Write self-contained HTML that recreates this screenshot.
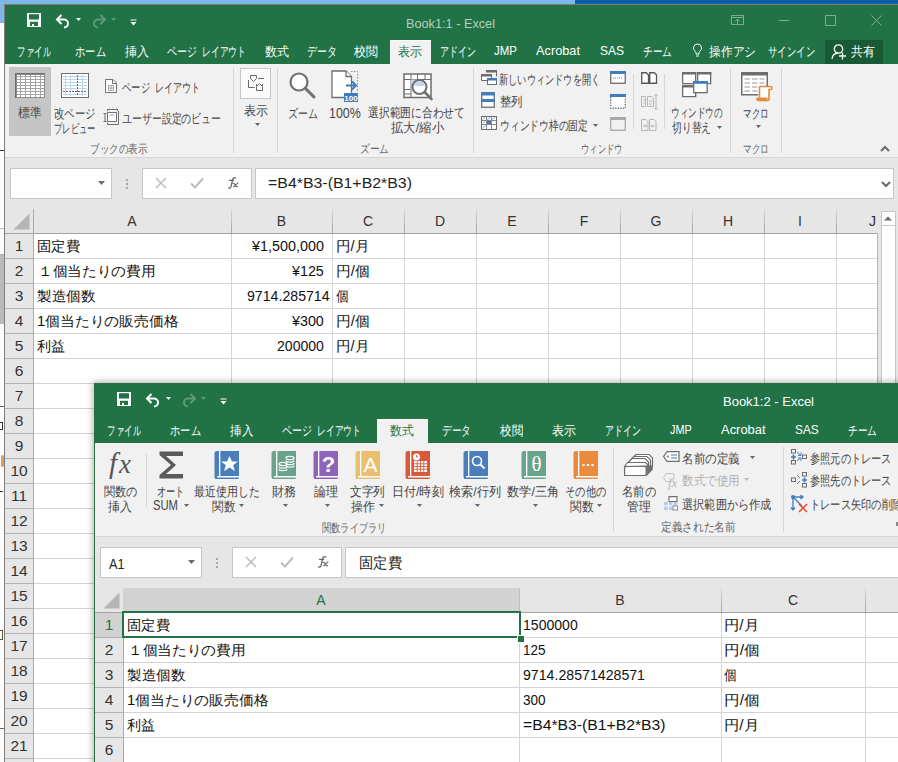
<!DOCTYPE html><html><head><meta charset='utf-8'><style>
*{margin:0;padding:0}
html,body{width:898px;height:762px;overflow:hidden;background:#fff}
body{position:relative;font-family:"Liberation Sans",sans-serif}
div{position:absolute}
.t{white-space:nowrap;line-height:1}
.t span{display:inline-block;transform-origin:0 0}
</style></head><body>
<div style="left:0px;top:0px;width:575px;height:4px;background:#7db8e8"></div>
<div style="left:575px;top:0px;width:323px;height:4px;background:#0a5bab"></div>
<div style="left:0px;top:4px;width:4px;height:19px;background:#7db8e8"></div>
<div style="left:0px;top:23px;width:4px;height:4px;background:#ffffff"></div>
<div style="left:0px;top:27px;width:4px;height:735px;background:#fcfcfc"></div>
<div style="left:0px;top:150px;width:4px;height:1px;background:#333"></div>
<div style="left:0px;top:228px;width:4px;height:1px;background:#bbb"></div>
<div style="left:0px;top:254px;width:4px;height:70px;background:#b9b9b9"></div>
<div style="left:0px;top:406px;width:4px;height:1px;background:#666"></div>
<div style="left:0px;top:422px;width:3px;height:8px;border-right:1px solid #333;border-top:1px solid #333;border-bottom:1px solid #333;box-sizing:border-box"></div>
<div style="left:1px;top:455px;width:3px;height:12px;background:#d9a066;border-radius:2px"></div>
<div style="left:0px;top:491px;width:3px;height:1px;background:#333"></div>
<div style="left:0px;top:630px;width:3px;height:10px;border-right:1px solid #553;border-top:1px solid #553;border-bottom:1px solid #553;box-sizing:border-box"></div>
<div style="left:0px;top:728px;width:4px;height:1px;background:#666"></div>
<div style="left:4px;top:4px;width:894px;height:1px;background:#837a7a"></div>
<div style="left:4px;top:4px;width:1px;height:758px;background:#837a7a"></div>
<div style="left:5px;top:5px;width:893px;height:59px;background:#217346"></div>
<div style="left:5px;top:64px;width:893px;height:93px;background:#f1f1f1"></div>
<div style="left:5px;top:157px;width:893px;height:1px;background:#d6d6d6"></div>
<div style="left:5px;top:158px;width:893px;height:604px;background:#e6e6e6"></div>
<svg style="position:absolute;left:27px;top:13px;overflow:visible" width="14" height="14" viewBox="0 0 14 14"><rect x="0" y="0" width="14" height="14" fill="#ffffff"/><rect x="2" y="1.2" width="10" height="5.3" fill="#217346"/><rect x="3" y="8.8" width="8" height="4.2" fill="#217346"/><rect x="5" y="11" width="2" height="2" fill="#ffffff"/></svg>
<svg style="position:absolute;left:55px;top:13px;overflow:visible" width="16" height="14" viewBox="0 0 16 14"><path d="M3 6.5h6a4 4 0 0 1 0 8" fill="none" stroke="#ffffff" stroke-width="2"/><path d="M6.5 2L2 6.5L6.5 11" fill="none" stroke="#ffffff" stroke-width="2"/></svg>
<svg style="position:absolute;left:76px;top:18px;overflow:visible" width="6" height="4" viewBox="0 0 6 4"><path d="M0 0h5l-2.5 3z" fill="#ffffff"/></svg>
<svg style="position:absolute;left:91px;top:13px;overflow:visible" width="16" height="14" viewBox="0 0 16 14"><path d="M13 6.5h-6a4 4 0 0 0 0 8" fill="none" stroke="#5f9a78" stroke-width="2"/><path d="M9.5 2L14 6.5L9.5 11" fill="none" stroke="#5f9a78" stroke-width="2"/></svg>
<svg style="position:absolute;left:111px;top:18px;overflow:visible" width="6" height="4" viewBox="0 0 6 4"><path d="M0 0h5l-2.5 3z" fill="#5f9a78"/></svg>
<svg style="position:absolute;left:130px;top:19px;overflow:visible" width="7" height="7" viewBox="0 0 7 7"><path d="M0.5 1h6" stroke="#ffffff" stroke-width="1"/><path d="M0.5 3h6l-3 3.5z" fill="#ffffff"/></svg>
<div class="t f" style="left:406px;top:16.7px;width:89.0px;font-size:13px;color:#b3d0be;"><span>Book1:1 - Excel</span></div>
<svg style="position:absolute;left:731px;top:15px;overflow:visible" width="13" height="10" viewBox="0 0 13 10"><path d="M0.5 0.5h12v9h-12zM0.5 2.5h12" fill="none" stroke="#7fae93" stroke-width="1"/><path d="M6.5 9.5v-5M4 6.5l2.5-2.5l2.5 2.5" fill="none" stroke="#7fae93" stroke-width="1"/></svg>
<div style="left:779px;top:20px;width:10px;height:1px;background:#7fae93"></div>
<svg style="position:absolute;left:825px;top:15px;overflow:visible" width="11" height="11" viewBox="0 0 11 11"><path d="M0.5 0.5h10v10h-10z" fill="none" stroke="#7fae93" stroke-width="1"/></svg>
<svg style="position:absolute;left:871px;top:15px;overflow:visible" width="11" height="11" viewBox="0 0 11 11"><path d="M0.5 0.5l10 10M10.5 0.5l-10 10" fill="none" stroke="#7fae93" stroke-width="1"/></svg>
<div style="left:390px;top:40px;width:41px;height:24px;background:#f1f1f1;border-top:1px solid #fafafa;box-sizing:border-box"></div>
<div style="left:825px;top:40px;width:58px;height:24px;background:#195a36"></div>
<div class="t f" style="left:17px;top:45.0px;width:34.0px;font-size:13px;color:#ffffff;"><span>ファイル</span></div>
<div class="t f" style="left:75px;top:45.0px;width:31.0px;font-size:13px;color:#ffffff;"><span>ホーム</span></div>
<div class="t f" style="left:125px;top:45.0px;width:24.0px;font-size:13px;color:#ffffff;"><span>挿入</span></div>
<div class="t f" style="left:167px;top:45.0px;width:30.0px;font-size:13px;color:#ffffff;"><span>ページ</span></div>
<div class="t f" style="left:202px;top:45.0px;width:44.0px;font-size:13px;color:#ffffff;"><span>レイアウト</span></div>
<div class="t f" style="left:265px;top:45.0px;width:24.0px;font-size:13px;color:#ffffff;"><span>数式</span></div>
<div class="t f" style="left:307px;top:45.0px;width:30.0px;font-size:13px;color:#ffffff;"><span>データ</span></div>
<div class="t f" style="left:354px;top:45.0px;width:24.0px;font-size:13px;color:#ffffff;"><span>校閲</span></div>
<div class="t f" style="left:440px;top:45.0px;width:36.0px;font-size:13px;color:#ffffff;"><span>アドイン</span></div>
<div class="t f" style="left:494px;top:44.0px;width:23.0px;font-size:13px;color:#ffffff;"><span>JMP</span></div>
<div class="t f" style="left:536px;top:44.0px;width:44.0px;font-size:13px;color:#ffffff;"><span>Acrobat</span></div>
<div class="t f" style="left:600px;top:44.0px;width:24.0px;font-size:13px;color:#ffffff;"><span>SAS</span></div>
<div class="t f" style="left:643px;top:45.0px;width:29.0px;font-size:13px;color:#ffffff;"><span>チーム</span></div>
<div class="t f" style="left:709px;top:45.0px;width:47.0px;font-size:13px;color:#ffffff;"><span>操作アシ</span></div>
<div class="t f" style="left:768px;top:45.0px;width:47.0px;font-size:13px;color:#ffffff;"><span>サインイン</span></div>
<div class="t f" style="left:851px;top:45.0px;width:24.0px;font-size:13px;color:#ffffff;"><span>共有</span></div>
<div class="t f" style="left:398px;top:45.0px;width:24.0px;font-size:13px;color:#217346;"><span>表示</span></div>
<svg style="position:absolute;left:692px;top:43px;overflow:visible" width="11" height="15" viewBox="0 0 11 15"><path d="M5.5 1a4 4 0 0 0-2.3 7.3c.6.5.8 1 .8 1.7v1h3v-1c0-.7.2-1.2.8-1.7A4 4 0 0 0 5.5 1z" fill="none" stroke="#fff" stroke-width="1"/><path d="M4 13h3" stroke="#fff" stroke-width="1"/></svg>
<svg style="position:absolute;left:831px;top:44px;overflow:visible" width="17" height="16" viewBox="0 0 17 16"><circle cx="7.5" cy="5" r="4.2" fill="none" stroke="#fff" stroke-width="1.3"/><path d="M1 15c0-3.2 2.5-6 6-6" fill="none" stroke="#fff" stroke-width="1.3"/><path d="M11.5 8.5v7M8 12h7" stroke="#fff" stroke-width="1.3"/></svg>
<div style="left:9px;top:67px;width:42px;height:69px;background:#c5c5c5"></div>
<svg style="position:absolute;left:15px;top:73px;overflow:visible" width="30" height="25" viewBox="0 0 30 25"><g shape-rendering="crispEdges"><rect x="0" y="0" width="30" height="25" fill="#6d6d6d"/><rect x="1" y="1" width="28" height="23" fill="#fff"/><rect x="5" y="1" width="1" height="23" fill="#a4a4a4"/><rect x="10" y="1" width="1" height="23" fill="#a4a4a4"/><rect x="15" y="1" width="1" height="23" fill="#a4a4a4"/><rect x="20" y="1" width="1" height="23" fill="#a4a4a4"/><rect x="25" y="1" width="1" height="23" fill="#a4a4a4"/><rect x="1" y="3" width="28" height="1" fill="#a4a4a4"/><rect x="1" y="6" width="28" height="1" fill="#a4a4a4"/><rect x="1" y="9" width="28" height="1" fill="#a4a4a4"/><rect x="1" y="12" width="28" height="1" fill="#a4a4a4"/><rect x="1" y="15" width="28" height="1" fill="#a4a4a4"/><rect x="1" y="18" width="28" height="1" fill="#a4a4a4"/><rect x="1" y="21" width="28" height="1" fill="#a4a4a4"/><rect x="1" y="1" width="28" height="23" fill="none" stroke="#8a8a8a" stroke-width="1"/></g></svg>
<div class="t f" style="left:18px;top:105.5px;width:23.5px;font-size:13px;color:#444444;"><span>標準</span></div>
<svg style="position:absolute;left:61px;top:73px;overflow:visible" width="28" height="25" viewBox="0 0 28 25"><g shape-rendering="crispEdges"><rect x="0" y="0" width="28" height="25" fill="#6d6d6d"/><rect x="1" y="1" width="26" height="23" fill="#fff"/><rect x="4" y="2" width="1" height="21" fill="#bcd3ec"/><rect x="9" y="2" width="1" height="21" fill="#bcd3ec"/><rect x="21" y="2" width="1" height="21" fill="#bcd3ec"/><rect x="2" y="3" width="24" height="1" fill="#bcd3ec"/><rect x="2" y="6" width="24" height="1" fill="#bcd3ec"/><rect x="2" y="9" width="24" height="1" fill="#bcd3ec"/><rect x="2" y="12" width="24" height="1" fill="#bcd3ec"/><rect x="2" y="15" width="24" height="1" fill="#bcd3ec"/><rect x="2" y="21" width="24" height="1" fill="#bcd3ec"/><rect x="16" y="2" width="1" height="2" fill="#6d6d6d"/><rect x="16" y="5" width="1" height="2" fill="#6d6d6d"/><rect x="16" y="8" width="1" height="2" fill="#6d6d6d"/><rect x="16" y="11" width="1" height="2" fill="#6d6d6d"/><rect x="16" y="14" width="1" height="2" fill="#6d6d6d"/><rect x="16" y="17" width="1" height="2" fill="#6d6d6d"/><rect x="16" y="20" width="1" height="2" fill="#6d6d6d"/><rect x="2" y="18" width="2" height="1" fill="#6d6d6d"/><rect x="5" y="18" width="2" height="1" fill="#6d6d6d"/><rect x="8" y="18" width="2" height="1" fill="#6d6d6d"/><rect x="11" y="18" width="2" height="1" fill="#6d6d6d"/><rect x="14" y="18" width="2" height="1" fill="#6d6d6d"/><rect x="17" y="18" width="2" height="1" fill="#6d6d6d"/><rect x="20" y="18" width="2" height="1" fill="#6d6d6d"/><rect x="23" y="18" width="2" height="1" fill="#6d6d6d"/></g></svg>
<div class="t f" style="left:54px;top:106.5px;width:41.7px;font-size:13px;color:#444444;"><span>改ページ</span></div>
<div class="t f" style="left:54px;top:121.5px;width:41.7px;font-size:13px;color:#444444;"><span>プレビュー</span></div>
<svg style="position:absolute;left:105px;top:79px;overflow:visible" width="12" height="14" viewBox="0 0 12 14"><path d="M0.5 0.5h7.5l3.5 3.5v9.5h-11z" fill="#fff" stroke="#707070" stroke-width="1"/><path d="M7.5 0.5v4h4" fill="none" stroke="#707070" stroke-width="1"/><path d="M3.5 6.5h5v5h-5zM6 6.5v5M3.5 9h5" fill="none" stroke="#a8a8a8" stroke-width="1"/></svg>
<div class="t f" style="left:122.3px;top:81.2px;width:28.0px;font-size:13px;color:#444444;"><span>ページ</span></div>
<div class="t f" style="left:155px;top:81.2px;width:45.2px;font-size:13px;color:#444444;"><span>レイアウト</span></div>
<svg style="position:absolute;left:103px;top:109px;overflow:visible" width="16" height="16" viewBox="0 0 16 16"><g fill="none" stroke="#707070" stroke-width="1"><path d="M0.5 4.5h3M2 4.5v8M0.5 12.5h3"/><path d="M4.5 0.5h10M4.5 0v2M14.5 0v2"/><path d="M4.5 3.5h9v9h-9z" fill="#fff"/><path d="M15.5 2v13.5h-11v-2"/></g><path d="M6.5 6h5" stroke="#a9c4e4" stroke-width="1.5"/></svg>
<div class="t f" style="left:122px;top:112.0px;width:99.0px;font-size:13px;color:#444444;"><span>ユーザー設定のビュー</span></div>
<div class="t f" style="left:90.4px;top:142.5px;width:57.2px;font-size:12px;color:#666666;"><span>ブックの表示</span></div>
<div style="left:233px;top:68px;width:1px;height:85px;background:#d5d5d5"></div>
<div style="left:240px;top:68px;width:31px;height:31px;background:#fafafa;border:1px solid #c6c6c6;box-sizing:border-box"></div>
<svg style="position:absolute;left:240px;top:68px;overflow:visible" width="30" height="30" viewBox="0 0 30 30"><g fill="none" stroke="#6a6a6a" stroke-width="1"><path d="M10.5 7.5h6v3l-3 3l-3-3z"/><path d="M8.5 12v7.5h6"/><path d="M18 10.5h6"/><path d="M16.5 16v2M22.5 16v2"/><path d="M16.5 22.5v-4l3-3l3 3v4z"/></g></svg>
<div class="t f" style="left:243.7px;top:103.5px;width:24.0px;font-size:13px;color:#444444;"><span>表示</span></div>
<svg style="position:absolute;left:255px;top:123px;overflow:visible" width="6" height="4" viewBox="0 0 6 4"><path d="M0 0h5l-2.5 3z" fill="#666"/></svg>
<div style="left:277px;top:68px;width:1px;height:85px;background:#d5d5d5"></div>
<svg style="position:absolute;left:288px;top:71px;overflow:visible" width="30" height="30" viewBox="0 0 30 30"><circle cx="11" cy="11" r="8.5" fill="#fff" stroke="#707070" stroke-width="2.2"/><path d="M17.5 17.5l8.5 8.5" stroke="#707070" stroke-width="3" stroke-linecap="round"/></svg>
<div class="t f" style="left:288px;top:106.5px;width:30.0px;font-size:13px;color:#444444;"><span>ズーム</span></div>
<svg style="position:absolute;left:331px;top:70px;overflow:visible" width="28" height="32" viewBox="0 0 28 32"><path d="M1 1h14l5.5 5.5v21h-19.5z" fill="#fff" stroke="#6d6d6d" stroke-width="1.3"/><path d="M15 1v5.5h5.5" fill="#fff" stroke="#6d6d6d" stroke-width="1.3"/><path d="M20 1.5h6.5v19" fill="none" stroke="#888" stroke-width="1" stroke-dasharray="1.5 1.5"/><path d="M15 15.5h10M21 11.5l4 4l-4 4" fill="none" stroke="#3f7cc0" stroke-width="2"/><rect x="13" y="23" width="14" height="9" fill="#3f7cc0"/><text x="20" y="30.6" font-size="8" font-family="Liberation Sans" font-weight="bold" fill="#fff" text-anchor="middle">100</text></svg>
<div class="t f" style="left:328.7px;top:105.7px;width:31.7px;font-size:14px;color:#444444;"><span>100%</span></div>
<svg style="position:absolute;left:403px;top:73px;overflow:visible" width="31" height="29" viewBox="0 0 31 29"><rect x="1" y="1" width="27" height="23.5" fill="#fff" stroke="#6d6d6d" stroke-width="1.5"/><path d="M1 6.5h27M8 1v23M14.5 1v6M22 1v6M1 16.5h6M1 21h7" stroke="#6d6d6d" stroke-width="1"/><rect x="8" y="6.5" width="7" height="5" fill="#c3d6ec"/><circle cx="16.5" cy="14" r="7" fill="#fff" stroke="#707070" stroke-width="2"/><path d="M11.5 13a5 5 0 0 1 10 0z" fill="#c3d6ec"/><path d="M21.5 19l7 7" stroke="#707070" stroke-width="2.6" stroke-linecap="round"/></svg>
<div class="t f" style="left:368px;top:106.0px;width:97.0px;font-size:13px;color:#444444;"><span>選択範囲に合わせて</span></div>
<div class="t f" style="left:391px;top:121.2px;width:53.0px;font-size:13px;color:#444444;"><span>拡大/縮小</span></div>
<div class="t f" style="left:360px;top:142.5px;width:29.0px;font-size:12px;color:#666666;"><span>ズーム</span></div>
<div style="left:473px;top:68px;width:1px;height:85px;background:#d5d5d5"></div>
<svg style="position:absolute;left:481px;top:70px;overflow:visible" width="16" height="15" viewBox="0 0 16 15"><path d="M5.5 0.5h10v6" fill="none" stroke="#6d6d6d" stroke-width="1"/><rect x="5" y="0" width="11" height="2.5" fill="#6d6d6d"/><path d="M0.5 4.5h10v6h-10z" fill="#fff" stroke="#6d6d6d" stroke-width="1"/><rect x="0" y="4" width="11" height="2.5" fill="#6d6d6d"/><rect x="6.5" y="8.5" width="9" height="6" fill="#fff" stroke="#6d6d6d" stroke-width="1"/><rect x="6" y="8" width="10" height="2.5" fill="#3f7cc0"/></svg>
<div class="t f" style="left:499.4px;top:73.1px;width:101.3px;font-size:13px;color:#444444;"><span>新しいウィンドウを開く</span></div>
<svg style="position:absolute;left:481px;top:92px;overflow:visible" width="14" height="16" viewBox="0 0 14 16"><rect x="0.75" y="0.75" width="12.5" height="14.5" fill="#fff" stroke="#6d6d6d" stroke-width="1.3"/><rect x="0" y="0.5" width="14" height="3" fill="#3f7cc0"/><rect x="0" y="7" width="14" height="3" fill="#3f7cc0"/></svg>
<div class="t f" style="left:500.3px;top:95.3px;width:22.7px;font-size:13px;color:#444444;"><span>整列</span></div>
<svg style="position:absolute;left:481px;top:116px;overflow:visible" width="16" height="14" viewBox="0 0 16 14"><g shape-rendering="crispEdges"><rect x="0" y="0" width="16" height="14" fill="#6d6d6d"/><rect x="1" y="1" width="14" height="12" fill="#fff"/><rect x="5" y="1" width="1" height="12" fill="#8a8a8a"/><rect x="10" y="1" width="1" height="12" fill="#8a8a8a"/><rect x="1" y="4" width="14" height="1" fill="#8a8a8a"/><rect x="1" y="8" width="14" height="1" fill="#8a8a8a"/><rect x="6" y="5" width="4" height="3" fill="#3f7cc0"/></g><path d="M1.5 3.5l3-2.5M6.5 3.5l3-2.5M11.5 3.5l3-2.5M1.5 7.5l3-2.5M1.5 12l3-2.5" stroke="#7fa9d8" stroke-width="1"/></svg>
<div class="t f" style="left:500px;top:118.5px;width:88.0px;font-size:13px;color:#444444;"><span>ウィンドウ枠の固定</span></div>
<svg style="position:absolute;left:593px;top:124px;overflow:visible" width="6" height="4" viewBox="0 0 6 4"><path d="M0 0h5l-2.5 3z" fill="#666"/></svg>
<svg style="position:absolute;left:610px;top:71px;overflow:visible" width="16" height="13" viewBox="0 0 16 13"><rect x="0.75" y="0.75" width="14.5" height="11.5" fill="#fff" stroke="#6d6d6d" stroke-width="1.3"/><rect x="0" y="0" width="16" height="3" fill="#3f7cc0"/><path d="M3 7h10" stroke="#3f7cc0" stroke-width="1" stroke-dasharray="1 1"/></svg>
<svg style="position:absolute;left:610px;top:94px;overflow:visible" width="16" height="15" viewBox="0 0 16 15"><rect x="0" y="0" width="16" height="3" fill="#3f7cc0"/><path d="M0.75 3v11.25h14.5v-11.25" fill="#fff" stroke="#6d6d6d" stroke-width="1.3" stroke-dasharray="1.3 1.3"/></svg>
<svg style="position:absolute;left:610px;top:117px;overflow:visible" width="16" height="14" viewBox="0 0 16 14"><rect x="0.75" y="0.75" width="14.5" height="12.5" fill="none" stroke="#a8a8a8" stroke-width="1.3"/><rect x="0" y="0" width="16" height="3" fill="#a8a8a8"/></svg>
<div style="left:633px;top:74px;width:1px;height:55px;background:#d5d5d5"></div>
<svg style="position:absolute;left:641px;top:72px;overflow:visible" width="17" height="12" viewBox="0 0 17 12"><path d="M0.75 0.75h4.5l2.25 2.25v8.25h-6.75zM8.75 0.75h4.5l2.25 2.25v8.25h-6.75z" fill="#fff" stroke="#555" stroke-width="1.3"/></svg>
<svg style="position:absolute;left:641px;top:94px;overflow:visible" width="17" height="16" viewBox="0 0 17 16"><g fill="none" stroke="#b5b5b5" stroke-width="1"><path d="M0.5 2.5h4v10h-4zM6.5 2.5h4l2 2v8h-6z"/><path d="M15 0.5v15M13.5 2l1.5-1.5l1.5 1.5M13.5 14l1.5 1.5l1.5-1.5"/><path d="M2 6h1.5M2 9h1.5M8 7h3M8 10h3"/></g></svg>
<svg style="position:absolute;left:641px;top:119px;overflow:visible" width="17" height="12" viewBox="0 0 17 12"><g fill="none" stroke="#b5b5b5" stroke-width="1"><path d="M0.5 0.5h4.5l2 2v9h-6.5zM8.5 0.5h4.5l2 2v9h-6.5z"/><path d="M2 7h3.5M4 5.5l1.5 1.5l-1.5 1.5M10 7h3.5M11.5 5.5l-1.5 1.5l1.5 1.5"/></g></svg>
<div style="left:664px;top:74px;width:1px;height:55px;background:#d5d5d5"></div>
<svg style="position:absolute;left:682px;top:72px;overflow:visible" width="30" height="25" viewBox="0 0 30 25"><g fill="#fff" stroke="#6d6d6d" stroke-width="1.3"><path d="M0.65 0.65h13v11h-13z"/><path d="M15.65 0.65h13v11h-13z"/><path d="M0.65 13.65h13v11h-13z"/></g><g fill="#6d6d6d"><rect x="0" y="0" width="14.3" height="2.5"/><rect x="15" y="0" width="14.3" height="2.5"/><rect x="0" y="13" width="14.3" height="2.5"/></g><rect x="11.65" y="9.65" width="13.5" height="11" fill="#fff" stroke="#6d6d6d" stroke-width="1.3"/><rect x="11" y="9" width="14.8" height="2.8" fill="#3f7cc0"/></svg>
<div class="t f" style="left:671.3px;top:106.3px;width:51.7px;font-size:13px;color:#444444;"><span>ウィンドウの</span></div>
<div class="t f" style="left:672px;top:120.8px;width:39.0px;font-size:13px;color:#444444;"><span>切り替え</span></div>
<svg style="position:absolute;left:717px;top:126px;overflow:visible" width="6" height="4" viewBox="0 0 6 4"><path d="M0 0h5l-2.5 3z" fill="#666"/></svg>
<div class="t f" style="left:580.8px;top:142.5px;width:41.7px;font-size:12px;color:#666666;"><span>ウィンドウ</span></div>
<div style="left:730px;top:68px;width:1px;height:85px;background:#d5d5d5"></div>
<svg style="position:absolute;left:741px;top:72px;overflow:visible" width="32" height="29" viewBox="0 0 32 29"><rect x="0.75" y="0.75" width="25.5" height="22" fill="#fff" stroke="#6d6d6d" stroke-width="1.5"/><rect x="0" y="0" width="27" height="3.5" fill="#6d6d6d"/><path d="M3.5 7h5.5M11 7h5.5M18.5 7h5" stroke="#9a9a9a" stroke-width="1.2"/><path d="M3.5 11h5.5M11 11h5.5M18.5 11h5" stroke="#9a9a9a" stroke-width="1.2"/><path d="M3.5 15h5.5M11 15h5.5M18.5 15h5" stroke="#9a9a9a" stroke-width="1.2"/><path d="M3.5 19h5.5M11 19h5.5M18.5 19h5" stroke="#9a9a9a" stroke-width="1.2"/><path d="M18.5 14.5h11a1.5 1.5 0 0 1 0 3h-1.5v9.5a1.5 1.5 0 0 1-1.5 1.5h-10" fill="#fff" stroke="#e38a3b" stroke-width="1.6"/><path d="M16.5 25.5h10v3h-10a1.5 1.5 0 0 1 0-3z" fill="#e38a3b"/><path d="M18.5 14.5v11" stroke="#e38a3b" stroke-width="1.6"/></svg>
<div class="t f" style="left:743px;top:106.5px;width:25.6px;font-size:13px;color:#444444;"><span>マクロ</span></div>
<svg style="position:absolute;left:756px;top:125px;overflow:visible" width="6" height="4" viewBox="0 0 6 4"><path d="M0 0h5l-2.5 3z" fill="#666"/></svg>
<div class="t f" style="left:743px;top:142.5px;width:26.0px;font-size:12px;color:#666666;"><span>マクロ</span></div>
<div style="left:781px;top:68px;width:1px;height:85px;background:#d5d5d5"></div>
<svg style="position:absolute;left:880px;top:145px;overflow:visible" width="10" height="7" viewBox="0 0 10 7"><path d="M1 6l4-4l4 4" fill="none" stroke="#6a6a6a" stroke-width="2"/></svg>
<div style="left:10px;top:168px;width:102px;height:31px;background:#fff;border:1px solid #c6c6c6;box-sizing:border-box"></div>
<svg style="position:absolute;left:98px;top:181px;overflow:visible" width="8" height="5" viewBox="0 0 8 5"><path d="M0 0h7l-3.5 4z" fill="#6a6a6a"/></svg>
<div style="left:126px;top:179px;width:2px;height:2px;background:#a8a8a8"></div>
<div style="left:126px;top:183px;width:2px;height:2px;background:#a8a8a8"></div>
<div style="left:126px;top:187px;width:2px;height:2px;background:#a8a8a8"></div>
<div style="left:142px;top:168px;width:110px;height:31px;background:#fff;border:1px solid #c6c6c6;box-sizing:border-box"></div>
<svg style="position:absolute;left:155px;top:177px;overflow:visible" width="12" height="12" viewBox="0 0 12 12"><path d="M1 1l10 10M11 1l-10 10" stroke="#bdbdbd" stroke-width="1.5"/></svg>
<svg style="position:absolute;left:190px;top:177px;overflow:visible" width="14" height="12" viewBox="0 0 14 12"><path d="M1 6.5l4 4l8-9" fill="none" stroke="#bdbdbd" stroke-width="2"/></svg>
<svg style="position:absolute;left:226px;top:176px;overflow:visible" width="14" height="14" viewBox="0 0 14 14"><g fill="none" stroke="#6a6a6a" stroke-linecap="round"><path d="M9.6 1.9c-1.6-.8-2.6.1-3 1.9L5.1 10.4c-.4 1.4-1.3 2-2.4 1.5" stroke-width="1.4"/><path d="M3.4 4.4h4.3" stroke-width="1.1"/><path d="M7.2 7.4c.9-.3 1.4.2 1.8 1.2l.8 1.6c.4.6.9.7 1.7.4M12 6.9l-4.2 3.9" stroke-width="1.2"/></g></svg>
<div style="left:255px;top:168px;width:639px;height:31px;background:#fff;border:1px solid #c6c6c6;box-sizing:border-box"></div>
<div class="t f" style="left:268px;top:174.5px;width:144.0px;font-size:15px;color:#222;"><span>=B4*B3-(B1+B2*B3)</span></div>
<svg style="position:absolute;left:881px;top:181px;overflow:visible" width="10" height="6" viewBox="0 0 10 6"><path d="M1 1l4 4l4-4" fill="none" stroke="#6a6a6a" stroke-width="2"/></svg>
<div style="left:5px;top:233px;width:872px;height:1px;background:#a2a2a2"></div>
<div style="left:33px;top:209px;width:1px;height:553px;background:#ababab"></div>
<div style="left:34px;top:234px;width:843px;height:528px;background:#fff"></div>
<svg style="position:absolute;left:13px;top:213px;overflow:visible" width="17" height="17" viewBox="0 0 17 17"><path d="M16.5 0.5v16h-16z" fill="#b4b4b4"/></svg>
<div style="left:231px;top:209px;width:1px;height:24px;background:linear-gradient(#d8d8d8,#a4a4a4)"></div>
<div style="left:231px;top:234px;width:1px;height:528px;background:#d4d4d4"></div>
<div style="left:332px;top:209px;width:1px;height:24px;background:linear-gradient(#d8d8d8,#a4a4a4)"></div>
<div style="left:332px;top:234px;width:1px;height:528px;background:#d4d4d4"></div>
<div style="left:404px;top:209px;width:1px;height:24px;background:linear-gradient(#d8d8d8,#a4a4a4)"></div>
<div style="left:404px;top:234px;width:1px;height:528px;background:#d4d4d4"></div>
<div style="left:476px;top:209px;width:1px;height:24px;background:linear-gradient(#d8d8d8,#a4a4a4)"></div>
<div style="left:476px;top:234px;width:1px;height:528px;background:#d4d4d4"></div>
<div style="left:548px;top:209px;width:1px;height:24px;background:linear-gradient(#d8d8d8,#a4a4a4)"></div>
<div style="left:548px;top:234px;width:1px;height:528px;background:#d4d4d4"></div>
<div style="left:620px;top:209px;width:1px;height:24px;background:linear-gradient(#d8d8d8,#a4a4a4)"></div>
<div style="left:620px;top:234px;width:1px;height:528px;background:#d4d4d4"></div>
<div style="left:692px;top:209px;width:1px;height:24px;background:linear-gradient(#d8d8d8,#a4a4a4)"></div>
<div style="left:692px;top:234px;width:1px;height:528px;background:#d4d4d4"></div>
<div style="left:764px;top:209px;width:1px;height:24px;background:linear-gradient(#d8d8d8,#a4a4a4)"></div>
<div style="left:764px;top:234px;width:1px;height:528px;background:#d4d4d4"></div>
<div style="left:836px;top:209px;width:1px;height:24px;background:linear-gradient(#d8d8d8,#a4a4a4)"></div>
<div style="left:836px;top:234px;width:1px;height:528px;background:#d4d4d4"></div>
<div style="left:5px;top:258px;width:28px;height:1px;background:#b2b2b2"></div>
<div style="left:34px;top:258px;width:843px;height:1px;background:#d4d4d4"></div>
<div style="left:5px;top:283px;width:28px;height:1px;background:#b2b2b2"></div>
<div style="left:34px;top:283px;width:843px;height:1px;background:#d4d4d4"></div>
<div style="left:5px;top:308px;width:28px;height:1px;background:#b2b2b2"></div>
<div style="left:34px;top:308px;width:843px;height:1px;background:#d4d4d4"></div>
<div style="left:5px;top:333px;width:28px;height:1px;background:#b2b2b2"></div>
<div style="left:34px;top:333px;width:843px;height:1px;background:#d4d4d4"></div>
<div style="left:5px;top:358px;width:28px;height:1px;background:#b2b2b2"></div>
<div style="left:34px;top:358px;width:843px;height:1px;background:#d4d4d4"></div>
<div style="left:5px;top:383px;width:28px;height:1px;background:#b2b2b2"></div>
<div style="left:34px;top:383px;width:843px;height:1px;background:#d4d4d4"></div>
<div style="left:5px;top:408px;width:28px;height:1px;background:#b2b2b2"></div>
<div style="left:34px;top:408px;width:843px;height:1px;background:#d4d4d4"></div>
<div style="left:5px;top:433px;width:28px;height:1px;background:#b2b2b2"></div>
<div style="left:34px;top:433px;width:843px;height:1px;background:#d4d4d4"></div>
<div style="left:5px;top:458px;width:28px;height:1px;background:#b2b2b2"></div>
<div style="left:34px;top:458px;width:843px;height:1px;background:#d4d4d4"></div>
<div style="left:5px;top:483px;width:28px;height:1px;background:#b2b2b2"></div>
<div style="left:34px;top:483px;width:843px;height:1px;background:#d4d4d4"></div>
<div style="left:5px;top:508px;width:28px;height:1px;background:#b2b2b2"></div>
<div style="left:34px;top:508px;width:843px;height:1px;background:#d4d4d4"></div>
<div style="left:5px;top:533px;width:28px;height:1px;background:#b2b2b2"></div>
<div style="left:34px;top:533px;width:843px;height:1px;background:#d4d4d4"></div>
<div style="left:5px;top:558px;width:28px;height:1px;background:#b2b2b2"></div>
<div style="left:34px;top:558px;width:843px;height:1px;background:#d4d4d4"></div>
<div style="left:5px;top:583px;width:28px;height:1px;background:#b2b2b2"></div>
<div style="left:34px;top:583px;width:843px;height:1px;background:#d4d4d4"></div>
<div style="left:5px;top:608px;width:28px;height:1px;background:#b2b2b2"></div>
<div style="left:34px;top:608px;width:843px;height:1px;background:#d4d4d4"></div>
<div style="left:5px;top:633px;width:28px;height:1px;background:#b2b2b2"></div>
<div style="left:34px;top:633px;width:843px;height:1px;background:#d4d4d4"></div>
<div style="left:5px;top:658px;width:28px;height:1px;background:#b2b2b2"></div>
<div style="left:34px;top:658px;width:843px;height:1px;background:#d4d4d4"></div>
<div style="left:5px;top:683px;width:28px;height:1px;background:#b2b2b2"></div>
<div style="left:34px;top:683px;width:843px;height:1px;background:#d4d4d4"></div>
<div style="left:5px;top:708px;width:28px;height:1px;background:#b2b2b2"></div>
<div style="left:34px;top:708px;width:843px;height:1px;background:#d4d4d4"></div>
<div style="left:5px;top:733px;width:28px;height:1px;background:#b2b2b2"></div>
<div style="left:34px;top:733px;width:843px;height:1px;background:#d4d4d4"></div>
<div style="left:5px;top:758px;width:28px;height:1px;background:#b2b2b2"></div>
<div style="left:34px;top:758px;width:843px;height:1px;background:#d4d4d4"></div>
<div style="left:877px;top:233px;width:1px;height:529px;background:#b4b4b4"></div>
<div style="left:881px;top:211px;width:15px;height:560px;background:#fff;border:1px solid #c6c6c6;box-sizing:border-box"></div>
<div style="left:881px;top:225px;width:15px;height:1px;background:#c6c6c6"></div>
<svg style="position:absolute;left:884px;top:216px;overflow:visible" width="9" height="5" viewBox="0 0 9 5"><path d="M0 4.5h8l-4-4z" fill="#6a6a6a"/></svg>
<div class="t" style="left:112.0px;top:214px;width:40px;text-align:center;font-size:14px;color:#333">A</div>
<div class="t" style="left:261.5px;top:214px;width:40px;text-align:center;font-size:14px;color:#333">B</div>
<div class="t" style="left:348.0px;top:214px;width:40px;text-align:center;font-size:14px;color:#333">C</div>
<div class="t" style="left:420.0px;top:214px;width:40px;text-align:center;font-size:14px;color:#333">D</div>
<div class="t" style="left:492.0px;top:214px;width:40px;text-align:center;font-size:14px;color:#333">E</div>
<div class="t" style="left:564.0px;top:214px;width:40px;text-align:center;font-size:14px;color:#333">F</div>
<div class="t" style="left:636.0px;top:214px;width:40px;text-align:center;font-size:14px;color:#333">G</div>
<div class="t" style="left:708.0px;top:214px;width:40px;text-align:center;font-size:14px;color:#333">H</div>
<div class="t" style="left:780.0px;top:214px;width:40px;text-align:center;font-size:14px;color:#333">I</div>
<div class="t" style="left:852.5px;top:214px;width:40px;text-align:center;font-size:14px;color:#333">J</div>
<div class="t" style="left:5px;top:237.5px;width:28px;text-align:center;font-size:15.5px;color:#333">1</div>
<div class="t" style="left:5px;top:262.5px;width:28px;text-align:center;font-size:15.5px;color:#333">2</div>
<div class="t" style="left:5px;top:287.5px;width:28px;text-align:center;font-size:15.5px;color:#333">3</div>
<div class="t" style="left:5px;top:312.5px;width:28px;text-align:center;font-size:15.5px;color:#333">4</div>
<div class="t" style="left:5px;top:337.5px;width:28px;text-align:center;font-size:15.5px;color:#333">5</div>
<div class="t" style="left:5px;top:362.5px;width:28px;text-align:center;font-size:15.5px;color:#333">6</div>
<div class="t" style="left:5px;top:387.5px;width:28px;text-align:center;font-size:15.5px;color:#333">7</div>
<div class="t" style="left:5px;top:412.5px;width:28px;text-align:center;font-size:15.5px;color:#333">8</div>
<div class="t" style="left:5px;top:437.5px;width:28px;text-align:center;font-size:15.5px;color:#333">9</div>
<div class="t" style="left:5px;top:462.5px;width:28px;text-align:center;font-size:15.5px;color:#333">10</div>
<div class="t" style="left:5px;top:487.5px;width:28px;text-align:center;font-size:15.5px;color:#333">11</div>
<div class="t" style="left:5px;top:512.5px;width:28px;text-align:center;font-size:15.5px;color:#333">12</div>
<div class="t" style="left:5px;top:537.5px;width:28px;text-align:center;font-size:15.5px;color:#333">13</div>
<div class="t" style="left:5px;top:562.5px;width:28px;text-align:center;font-size:15.5px;color:#333">14</div>
<div class="t" style="left:5px;top:587.5px;width:28px;text-align:center;font-size:15.5px;color:#333">15</div>
<div class="t" style="left:5px;top:612.5px;width:28px;text-align:center;font-size:15.5px;color:#333">16</div>
<div class="t" style="left:5px;top:637.5px;width:28px;text-align:center;font-size:15.5px;color:#333">17</div>
<div class="t" style="left:5px;top:662.5px;width:28px;text-align:center;font-size:15.5px;color:#333">18</div>
<div class="t" style="left:5px;top:687.5px;width:28px;text-align:center;font-size:15.5px;color:#333">19</div>
<div class="t" style="left:5px;top:712.5px;width:28px;text-align:center;font-size:15.5px;color:#333">20</div>
<div class="t" style="left:5px;top:737.5px;width:28px;text-align:center;font-size:15.5px;color:#333">21</div>
<div class="t f" style="left:37px;top:239.0px;width:43.0px;font-size:14px;color:#111;"><span>固定費</span></div>
<div class="t f" style="left:37.5px;top:264.0px;width:117.5px;font-size:14px;color:#111;"><span>１個当たりの費用</span></div>
<div class="t f" style="left:37px;top:289.0px;width:58.5px;font-size:14px;color:#111;"><span>製造個数</span></div>
<div class="t f" style="left:37px;top:314.0px;width:141.5px;font-size:14px;color:#111;"><span>1個当たりの販売価格</span></div>
<div class="t f" style="left:37px;top:339.0px;width:28.0px;font-size:14px;color:#111;"><span>利益</span></div>
<div class="t f" style="left:251.7px;top:237.5px;width:71.9px;font-size:15px;color:#111;"><span>¥1,500,000</span></div>
<div class="t f" style="left:291.8px;top:262.5px;width:31.8px;font-size:15px;color:#111;"><span>¥125</span></div>
<div class="t f" style="left:246.7px;top:287.5px;width:82.6px;font-size:15px;color:#111;"><span>9714.285714</span></div>
<div class="t f" style="left:291.8px;top:312.5px;width:31.8px;font-size:15px;color:#111;"><span>¥300</span></div>
<div class="t f" style="left:276.7px;top:337.5px;width:46.9px;font-size:15px;color:#111;"><span>200000</span></div>
<div class="t f" style="left:336.3px;top:239.0px;width:33.2px;font-size:14px;color:#111;"><span>円/月</span></div>
<div class="t f" style="left:336.3px;top:264.0px;width:33.7px;font-size:14px;color:#111;"><span>円/個</span></div>
<div class="t f" style="left:336.3px;top:289.0px;width:12.7px;font-size:14px;color:#111;"><span>個</span></div>
<div class="t f" style="left:336.3px;top:314.0px;width:33.7px;font-size:14px;color:#111;"><span>円/個</span></div>
<div class="t f" style="left:336.3px;top:339.0px;width:33.2px;font-size:14px;color:#111;"><span>円/月</span></div>
<div style="left:94px;top:383px;width:820px;height:400px;box-shadow:0 0 7px 1px rgba(0,0,0,0.32)"></div>
<div style="left:94px;top:383px;width:804px;height:379px;background:#e6e6e6"></div>
<div style="left:94px;top:383px;width:804px;height:60px;background:#217346"></div>
<div style="left:95px;top:443px;width:803px;height:93px;background:#f1f1f1"></div>
<div style="left:95px;top:536px;width:803px;height:1px;background:#d6d6d6"></div>
<div style="left:94px;top:443px;width:1px;height:319px;background:#217346"></div>
<svg style="position:absolute;left:117px;top:392px;overflow:visible" width="14" height="14" viewBox="0 0 14 14"><rect x="0" y="0" width="14" height="14" fill="#ffffff"/><rect x="2" y="1.2" width="10" height="5.3" fill="#217346"/><rect x="3" y="8.8" width="8" height="4.2" fill="#217346"/><rect x="5" y="11" width="2" height="2" fill="#ffffff"/></svg>
<svg style="position:absolute;left:145px;top:392px;overflow:visible" width="16" height="14" viewBox="0 0 16 14"><path d="M3 6.5h6a4 4 0 0 1 0 8" fill="none" stroke="#ffffff" stroke-width="2"/><path d="M6.5 2L2 6.5L6.5 11" fill="none" stroke="#ffffff" stroke-width="2"/></svg>
<svg style="position:absolute;left:166px;top:397px;overflow:visible" width="6" height="4" viewBox="0 0 6 4"><path d="M0 0h5l-2.5 3z" fill="#ffffff"/></svg>
<svg style="position:absolute;left:181px;top:392px;overflow:visible" width="16" height="14" viewBox="0 0 16 14"><path d="M13 6.5h-6a4 4 0 0 0 0 8" fill="none" stroke="#5f9a78" stroke-width="2"/><path d="M9.5 2L14 6.5L9.5 11" fill="none" stroke="#5f9a78" stroke-width="2"/></svg>
<svg style="position:absolute;left:201px;top:397px;overflow:visible" width="6" height="4" viewBox="0 0 6 4"><path d="M0 0h5l-2.5 3z" fill="#5f9a78"/></svg>
<svg style="position:absolute;left:220px;top:398px;overflow:visible" width="7" height="7" viewBox="0 0 7 7"><path d="M0.5 1h6" stroke="#ffffff" stroke-width="1"/><path d="M0.5 3h6l-3 3.5z" fill="#ffffff"/></svg>
<div class="t f" style="left:723px;top:395.3px;width:91.0px;font-size:13px;color:#ffffff;"><span>Book1:2 - Excel</span></div>
<div style="left:377px;top:419px;width:51px;height:24px;background:#f1f1f1;border-top:1px solid #fafafa;box-sizing:border-box"></div>
<div class="t f" style="left:107px;top:424.0px;width:34.0px;font-size:13px;color:#ffffff;"><span>ファイル</span></div>
<div class="t f" style="left:170px;top:424.0px;width:31.0px;font-size:13px;color:#ffffff;"><span>ホーム</span></div>
<div class="t f" style="left:230px;top:424.0px;width:23.0px;font-size:13px;color:#ffffff;"><span>挿入</span></div>
<div class="t f" style="left:282px;top:424.0px;width:30.0px;font-size:13px;color:#ffffff;"><span>ページ</span></div>
<div class="t f" style="left:317px;top:424.0px;width:44.0px;font-size:13px;color:#ffffff;"><span>レイアウト</span></div>
<div class="t f" style="left:442px;top:424.0px;width:29.0px;font-size:13px;color:#ffffff;"><span>データ</span></div>
<div class="t f" style="left:500px;top:424.0px;width:23.0px;font-size:13px;color:#ffffff;"><span>校閲</span></div>
<div class="t f" style="left:552.4px;top:424.0px;width:24.0px;font-size:13px;color:#ffffff;"><span>表示</span></div>
<div class="t f" style="left:605.4px;top:424.0px;width:35.6px;font-size:13px;color:#ffffff;"><span>アドイン</span></div>
<div class="t f" style="left:670px;top:423.0px;width:21.7px;font-size:13px;color:#ffffff;"><span>JMP</span></div>
<div class="t f" style="left:721px;top:423.0px;width:44.6px;font-size:13px;color:#ffffff;"><span>Acrobat</span></div>
<div class="t f" style="left:795px;top:423.0px;width:23.7px;font-size:13px;color:#ffffff;"><span>SAS</span></div>
<div class="t f" style="left:847.5px;top:424.0px;width:29.0px;font-size:13px;color:#ffffff;"><span>チーム</span></div>
<div class="t f" style="left:390px;top:424.0px;width:23.7px;font-size:13px;color:#217346;"><span>数式</span></div>
<svg style="position:absolute;left:107px;top:449px;overflow:visible" width="28" height="32" viewBox="0 0 28 32"><text x="2" y="24" font-family="Liberation Serif" font-style="italic" font-size="29" fill="#555">f</text><text x="12" y="24" font-family="Liberation Serif" font-style="italic" font-size="27" fill="#555">x</text></svg>
<div class="t f" style="left:103.5px;top:484.9px;width:33.5px;font-size:13px;color:#444444;"><span>関数の</span></div>
<div class="t f" style="left:107.8px;top:499.5px;width:23.7px;font-size:13px;color:#444444;"><span>挿入</span></div>
<div style="left:146px;top:454px;width:1px;height:53px;background:#d5d5d5"></div>
<svg style="position:absolute;left:159px;top:451px;overflow:visible" width="25" height="28" viewBox="0 0 25 28"><path d="M0.5 0.5h23.5v4.5h-17l10 9l-10 9h17v4.5h-23.5v-3.5l11.5-10l-11.5-10z" fill="#5a5a5a"/></svg>
<div class="t f" style="left:156.5px;top:484.5px;width:27.5px;font-size:13px;color:#444444;"><span>オート</span></div>
<div class="t f" style="left:153px;top:498.0px;width:25.0px;font-size:14px;color:#444444;"><span>SUM</span></div>
<svg style="position:absolute;left:184px;top:504px;overflow:visible" width="6" height="4" viewBox="0 0 6 4"><path d="M0 0h5l-2.5 3z" fill="#666"/></svg>
<svg style="position:absolute;left:215px;top:451px;overflow:visible" width="24" height="28" viewBox="0 0 24 28"><path d="M2.5 0h21.5v25h-22a2.5 2.5 0 0 0 0 3h22v0h-22a2.5 2.5 0 0 1-2.5-2.5v-23a2.5 2.5 0 0 1 2.5-2.5z" fill="#4a7ebb"/><rect x="0" y="24" width="24" height="4" rx="1.5" fill="#4a7ebb"/><rect x="2" y="25" width="22" height="1.5" fill="#fff"/><rect x="4" y="0" width="1.3" height="25" fill="#fff"/><path d="M14.5 5l2.4 5.5h6l-4.8 3.7l1.9 6l-5.5-3.7l-5.5 3.7l1.9-6l-4.8-3.7h6z" fill="#fff"/></svg>
<div class="t f" style="left:194px;top:484.5px;width:66.0px;font-size:13px;color:#444444;"><span>最近使用した</span></div>
<div class="t f" style="left:211.7px;top:499.5px;width:23.3px;font-size:13px;color:#444444;"><span>関数</span></div>
<svg style="position:absolute;left:239px;top:504px;overflow:visible" width="6" height="4" viewBox="0 0 6 4"><path d="M0 0h5l-2.5 3z" fill="#666"/></svg>
<svg style="position:absolute;left:272px;top:451px;overflow:visible" width="24" height="28" viewBox="0 0 24 28"><path d="M2.5 0h21.5v25h-22a2.5 2.5 0 0 0 0 3h22v0h-22a2.5 2.5 0 0 1-2.5-2.5v-23a2.5 2.5 0 0 1 2.5-2.5z" fill="#6aa38c"/><rect x="0" y="24" width="24" height="4" rx="1.5" fill="#6aa38c"/><rect x="2" y="25" width="22" height="1.5" fill="#fff"/><rect x="4" y="0" width="1.3" height="25" fill="#fff"/><g fill="none" stroke="#fff" stroke-width="1.2"><ellipse cx="18" cy="7" rx="4" ry="1.6"/><path d="M14 9.5a4 1.6 0 0 0 8 0M14 12a4 1.6 0 0 0 8 0M14 14.5a4 1.6 0 0 0 8 0"/><ellipse cx="11" cy="13" rx="4" ry="1.6"/><path d="M7 15.5a4 1.6 0 0 0 8 0M7 18a4 1.6 0 0 0 8 0"/></g></svg>
<div class="t f" style="left:272px;top:484.5px;width:24.0px;font-size:13px;color:#444444;"><span>財務</span></div>
<svg style="position:absolute;left:283px;top:504px;overflow:visible" width="6" height="4" viewBox="0 0 6 4"><path d="M0 0h5l-2.5 3z" fill="#666"/></svg>
<svg style="position:absolute;left:314px;top:451px;overflow:visible" width="24" height="28" viewBox="0 0 24 28"><path d="M2.5 0h21.5v25h-22a2.5 2.5 0 0 0 0 3h22v0h-22a2.5 2.5 0 0 1-2.5-2.5v-23a2.5 2.5 0 0 1 2.5-2.5z" fill="#8f63b8"/><rect x="0" y="24" width="24" height="4" rx="1.5" fill="#8f63b8"/><rect x="2" y="25" width="22" height="1.5" fill="#fff"/><rect x="4" y="0" width="1.3" height="25" fill="#fff"/><text x="14.5" y="21" font-family="Liberation Sans" font-weight="bold" font-size="22" fill="#fff" text-anchor="middle">?</text></svg>
<div class="t f" style="left:313.8px;top:484.5px;width:24.2px;font-size:13px;color:#444444;"><span>論理</span></div>
<svg style="position:absolute;left:325px;top:504px;overflow:visible" width="6" height="4" viewBox="0 0 6 4"><path d="M0 0h5l-2.5 3z" fill="#666"/></svg>
<svg style="position:absolute;left:356px;top:451px;overflow:visible" width="24" height="28" viewBox="0 0 24 28"><path d="M2.5 0h21.5v25h-22a2.5 2.5 0 0 0 0 3h22v0h-22a2.5 2.5 0 0 1-2.5-2.5v-23a2.5 2.5 0 0 1 2.5-2.5z" fill="#e9bf6e"/><rect x="0" y="24" width="24" height="4" rx="1.5" fill="#e9bf6e"/><rect x="2" y="25" width="22" height="1.5" fill="#fff"/><rect x="4" y="0" width="1.3" height="25" fill="#fff"/><text x="14.5" y="20.5" font-family="Liberation Sans" font-size="21" fill="#fff" text-anchor="middle">A</text></svg>
<div class="t f" style="left:350px;top:484.5px;width:35.0px;font-size:13px;color:#444444;"><span>文字列</span></div>
<div class="t f" style="left:351px;top:499.5px;width:24.0px;font-size:13px;color:#444444;"><span>操作</span></div>
<svg style="position:absolute;left:379px;top:504px;overflow:visible" width="6" height="4" viewBox="0 0 6 4"><path d="M0 0h5l-2.5 3z" fill="#666"/></svg>
<svg style="position:absolute;left:406px;top:451px;overflow:visible" width="24" height="28" viewBox="0 0 24 28"><path d="M2.5 0h21.5v25h-22a2.5 2.5 0 0 0 0 3h22v0h-22a2.5 2.5 0 0 1-2.5-2.5v-23a2.5 2.5 0 0 1 2.5-2.5z" fill="#d55b3c"/><rect x="0" y="24" width="24" height="4" rx="1.5" fill="#d55b3c"/><rect x="2" y="25" width="22" height="1.5" fill="#fff"/><rect x="4" y="0" width="1.3" height="25" fill="#fff"/><circle cx="10.5" cy="6" r="3.5" fill="#fff"/><path d="M10.5 4v2h1.5" stroke="#d55b3c" stroke-width="0.9" fill="none"/><rect x="8" y="10" width="13" height="11" fill="#fff"/><path d="M8 12.8h13M8 15.5h13M8 18.2h13M11.2 10v11M14.5 10v11M17.8 10v11" stroke="#d55b3c" stroke-width="0.9"/></svg>
<div class="t f" style="left:391.8px;top:484.5px;width:51.6px;font-size:13px;color:#444444;"><span>日付/時刻</span></div>
<svg style="position:absolute;left:417px;top:504px;overflow:visible" width="6" height="4" viewBox="0 0 6 4"><path d="M0 0h5l-2.5 3z" fill="#666"/></svg>
<svg style="position:absolute;left:464px;top:451px;overflow:visible" width="24" height="28" viewBox="0 0 24 28"><path d="M2.5 0h21.5v25h-22a2.5 2.5 0 0 0 0 3h22v0h-22a2.5 2.5 0 0 1-2.5-2.5v-23a2.5 2.5 0 0 1 2.5-2.5z" fill="#4a7ebb"/><rect x="0" y="24" width="24" height="4" rx="1.5" fill="#4a7ebb"/><rect x="2" y="25" width="22" height="1.5" fill="#fff"/><rect x="4" y="0" width="1.3" height="25" fill="#fff"/><circle cx="13" cy="10" r="4.5" fill="none" stroke="#fff" stroke-width="1.6"/><path d="M16.2 13.2l4.3 4.3" stroke="#fff" stroke-width="2"/></svg>
<div class="t f" style="left:449px;top:484.5px;width:51.8px;font-size:13px;color:#444444;"><span>検索/行列</span></div>
<svg style="position:absolute;left:475px;top:504px;overflow:visible" width="6" height="4" viewBox="0 0 6 4"><path d="M0 0h5l-2.5 3z" fill="#666"/></svg>
<svg style="position:absolute;left:522px;top:451px;overflow:visible" width="24" height="28" viewBox="0 0 24 28"><path d="M2.5 0h21.5v25h-22a2.5 2.5 0 0 0 0 3h22v0h-22a2.5 2.5 0 0 1-2.5-2.5v-23a2.5 2.5 0 0 1 2.5-2.5z" fill="#6aa38c"/><rect x="0" y="24" width="24" height="4" rx="1.5" fill="#6aa38c"/><rect x="2" y="25" width="22" height="1.5" fill="#fff"/><rect x="4" y="0" width="1.3" height="25" fill="#fff"/><text x="14.5" y="20" font-family="Liberation Serif" font-size="21" fill="#fff" text-anchor="middle">θ</text></svg>
<div class="t f" style="left:506.8px;top:484.5px;width:52.2px;font-size:13px;color:#444444;"><span>数学/三角</span></div>
<svg style="position:absolute;left:533px;top:504px;overflow:visible" width="6" height="4" viewBox="0 0 6 4"><path d="M0 0h5l-2.5 3z" fill="#666"/></svg>
<svg style="position:absolute;left:574px;top:451px;overflow:visible" width="24" height="28" viewBox="0 0 24 28"><path d="M2.5 0h21.5v25h-22a2.5 2.5 0 0 0 0 3h22v0h-22a2.5 2.5 0 0 1-2.5-2.5v-23a2.5 2.5 0 0 1 2.5-2.5z" fill="#e98a3c"/><rect x="0" y="24" width="24" height="4" rx="1.5" fill="#e98a3c"/><rect x="2" y="25" width="22" height="1.5" fill="#fff"/><rect x="4" y="0" width="1.3" height="25" fill="#fff"/><circle cx="9.5" cy="14" r="1.3" fill="#fff"/><circle cx="14" cy="14" r="1.3" fill="#fff"/><circle cx="18.5" cy="14" r="1.3" fill="#fff"/></svg>
<div class="t f" style="left:565px;top:484.5px;width:41.0px;font-size:13px;color:#444444;"><span>その他の</span></div>
<div class="t f" style="left:569.5px;top:499.5px;width:23.5px;font-size:13px;color:#444444;"><span>関数</span></div>
<svg style="position:absolute;left:597px;top:504px;overflow:visible" width="6" height="4" viewBox="0 0 6 4"><path d="M0 0h5l-2.5 3z" fill="#666"/></svg>
<div class="t f" style="left:321.8px;top:521.5px;width:64.2px;font-size:12px;color:#666666;"><span>関数ライブラリ</span></div>
<div style="left:613px;top:447px;width:1px;height:85px;background:#d5d5d5"></div>
<svg style="position:absolute;left:624px;top:454px;overflow:visible" width="29" height="22" viewBox="0 0 29 22"><g fill="#fff" stroke="#6d6d6d" stroke-width="1.2"><path d="M8 4.5l4-4h13l3.5 3.5v9"/><path d="M6 6.5l4-4h13l3.5 3.5v9"/><path d="M4 8.5l4-4h13l3.5 3.5v9"/><path d="M0.6 12.5v9h21.5v-9z"/><path d="M0.6 12.5l3-4h18l3.5 3.5h-3z"/><path d="M22.1 21.5l6-6v-3.5l-6 0.5"/></g><path d="M22.1 21.5l6-6v-3.5l-6 0.5z" fill="#6d6d6d"/></svg>
<div class="t f" style="left:622px;top:484.5px;width:34.0px;font-size:13px;color:#444444;"><span>名前の</span></div>
<div class="t f" style="left:627.4px;top:499.5px;width:23.6px;font-size:13px;color:#444444;"><span>管理</span></div>
<svg style="position:absolute;left:663px;top:451px;overflow:visible" width="17" height="11" viewBox="0 0 17 11"><path d="M4 0.6h12v9.8h-12l-3.4-4.9z" fill="#fff" stroke="#6d6d6d" stroke-width="1.2"/><circle cx="5" cy="5.5" r="1" fill="#6d6d6d"/><path d="M8 4h6M8 7h6" stroke="#3f7cc0" stroke-width="1.2"/></svg>
<div class="t f" style="left:681.8px;top:451.8px;width:57.9px;font-size:13px;color:#444444;"><span>名前の定義</span></div>
<svg style="position:absolute;left:750px;top:456px;overflow:visible" width="6" height="4" viewBox="0 0 6 4"><path d="M0 0h5l-2.5 3z" fill="#666"/></svg>
<svg style="position:absolute;left:663px;top:473px;overflow:visible" width="15" height="15" viewBox="0 0 15 15"><path d="M3 0.6h8v5l-3 3h-5l-2.4-4z" fill="none" stroke="#c3c3c3" stroke-width="1"/><text x="5" y="14" font-family="Liberation Serif" font-style="italic" font-size="13" fill="#b5b5b5">fx</text></svg>
<div class="t f" style="left:681.8px;top:473.8px;width:57.9px;font-size:13px;color:#b0b0b0;"><span>数式で使用</span></div>
<svg style="position:absolute;left:744px;top:478px;overflow:visible" width="6" height="4" viewBox="0 0 6 4"><path d="M0 0h5l-2.5 3z" fill="#bbb"/></svg>
<svg style="position:absolute;left:664px;top:496px;overflow:visible" width="14" height="14" viewBox="0 0 14 14"><path d="M5 0.6h8v5h-8z" fill="#fff" stroke="#6d6d6d" stroke-width="1.1"/><rect x="0" y="6" width="13" height="8" fill="#b9cde6"/><path d="M0 10h13M4.5 6v8M9 6v8" stroke="#fff" stroke-width="1"/><rect x="9" y="10" width="4.5" height="4" fill="#fff" stroke="#6d6d6d" stroke-width="0.8"/></svg>
<div class="t f" style="left:681.8px;top:497.5px;width:89.7px;font-size:13px;color:#444444;"><span>選択範囲から作成</span></div>
<div class="t f" style="left:660.5px;top:521.4px;width:74.8px;font-size:12px;color:#666666;"><span>定義された名前</span></div>
<div style="left:783px;top:447px;width:1px;height:85px;background:#d5d5d5"></div>
<svg style="position:absolute;left:791px;top:449px;overflow:visible" width="17" height="16" viewBox="0 0 17 16"><g fill="none" stroke="#6d6d6d" stroke-width="1"><rect x="0.5" y="0.5" width="4" height="3.5"/><rect x="0.5" y="11.5" width="4" height="3.5"/><rect x="11.5" y="6" width="4" height="3.5"/></g><path d="M2.5 5.5v5M0 8h5" stroke="#3f7cc0" stroke-width="1.6"/><path d="M6 3l3.5 3M6 12l3.5-3M7 6.5h3v-3M7 9h3v3" fill="none" stroke="#3f7cc0" stroke-width="1"/></svg>
<div class="t f" style="left:810px;top:451.5px;width:81.7px;font-size:13px;color:#444444;"><span>参照元のトレース</span></div>
<svg style="position:absolute;left:791px;top:472px;overflow:visible" width="17" height="16" viewBox="0 0 17 16"><g fill="none" stroke="#6d6d6d" stroke-width="1"><rect x="0.5" y="6" width="4" height="3.5"/><rect x="11.5" y="0.5" width="4" height="3.5"/><rect x="11.5" y="11.5" width="4" height="3.5"/></g><path d="M13.5 5.5v5M11 8h5" stroke="#3f7cc0" stroke-width="1.6"/><path d="M6 3l3 3M6 12l3-3" fill="none" stroke="#3f7cc0" stroke-width="1"/></svg>
<div class="t f" style="left:810px;top:473.8px;width:81.7px;font-size:13px;color:#444444;"><span>参照先のトレース</span></div>
<svg style="position:absolute;left:791px;top:495px;overflow:visible" width="17" height="17" viewBox="0 0 17 17"><circle cx="2" cy="2" r="2" fill="#3f7cc0"/><path d="M2 3v12M0 12.5l2 2.5l2-2.5M3 2h9M9.5 0l2.5 2l-2.5 2M3 3l8 8" fill="none" stroke="#3f7cc0" stroke-width="1.3"/><path d="M8 9l8 8M16 9l-8 8" stroke="#e0533a" stroke-width="1.6"/></svg>
<div class="t f" style="left:810px;top:497.5px;width:92.0px;font-size:13px;color:#444444;"><span>トレース矢印の削除</span></div>
<div style="left:896px;top:522px;width:2px;height:4px;background:#888"></div>
<div style="left:100px;top:547px;width:102px;height:31px;background:#fff;border:1px solid #c6c6c6;box-sizing:border-box"></div>
<div class="t f" style="left:108.5px;top:556.5px;width:15.5px;font-size:14px;color:#222;"><span>A1</span></div>
<svg style="position:absolute;left:188px;top:560px;overflow:visible" width="8" height="5" viewBox="0 0 8 5"><path d="M0 0h7l-3.5 4z" fill="#6a6a6a"/></svg>
<div style="left:216px;top:558px;width:2px;height:2px;background:#a8a8a8"></div>
<div style="left:216px;top:562px;width:2px;height:2px;background:#a8a8a8"></div>
<div style="left:216px;top:566px;width:2px;height:2px;background:#a8a8a8"></div>
<div style="left:232px;top:547px;width:110px;height:31px;background:#fff;border:1px solid #c6c6c6;box-sizing:border-box"></div>
<svg style="position:absolute;left:245px;top:556px;overflow:visible" width="12" height="12" viewBox="0 0 12 12"><path d="M1 1l10 10M11 1l-10 10" stroke="#bdbdbd" stroke-width="1.5"/></svg>
<svg style="position:absolute;left:280px;top:556px;overflow:visible" width="14" height="12" viewBox="0 0 14 12"><path d="M1 6.5l4 4l8-9" fill="none" stroke="#bdbdbd" stroke-width="2"/></svg>
<svg style="position:absolute;left:316px;top:555px;overflow:visible" width="14" height="14" viewBox="0 0 14 14"><g fill="none" stroke="#6a6a6a" stroke-linecap="round"><path d="M9.6 1.9c-1.6-.8-2.6.1-3 1.9L5.1 10.4c-.4 1.4-1.3 2-2.4 1.5" stroke-width="1.4"/><path d="M3.4 4.4h4.3" stroke-width="1.1"/><path d="M7.2 7.4c.9-.3 1.4.2 1.8 1.2l.8 1.6c.4.6.9.7 1.7.4M12 6.9l-4.2 3.9" stroke-width="1.2"/></g></svg>
<div style="left:345px;top:547px;width:553px;height:31px;background:#fff;border:1px solid #c6c6c6;box-sizing:border-box;border-right:none"></div>
<div class="t f" style="left:359px;top:554.5px;width:43.0px;font-size:15px;color:#222;"><span>固定費</span></div>
<div style="left:95px;top:612px;width:803px;height:1px;background:#a2a2a2"></div>
<div style="left:123px;top:588px;width:1px;height:174px;background:#ababab"></div>
<div style="left:124px;top:613px;width:774px;height:149px;background:#fff"></div>
<svg style="position:absolute;left:103px;top:592px;overflow:visible" width="17" height="17" viewBox="0 0 17 17"><path d="M16.5 0.5v16h-16z" fill="#b4b4b4"/></svg>
<div style="left:519px;top:588px;width:1px;height:24px;background:linear-gradient(#d8d8d8,#a4a4a4)"></div>
<div style="left:519px;top:613px;width:1px;height:149px;background:#d4d4d4"></div>
<div style="left:721px;top:588px;width:1px;height:24px;background:linear-gradient(#d8d8d8,#a4a4a4)"></div>
<div style="left:721px;top:613px;width:1px;height:149px;background:#d4d4d4"></div>
<div style="left:865px;top:588px;width:1px;height:24px;background:linear-gradient(#d8d8d8,#a4a4a4)"></div>
<div style="left:865px;top:613px;width:1px;height:149px;background:#d4d4d4"></div>
<div style="left:95px;top:637px;width:28px;height:1px;background:#b2b2b2"></div>
<div style="left:124px;top:637px;width:774px;height:1px;background:#d4d4d4"></div>
<div style="left:95px;top:662px;width:28px;height:1px;background:#b2b2b2"></div>
<div style="left:124px;top:662px;width:774px;height:1px;background:#d4d4d4"></div>
<div style="left:95px;top:687px;width:28px;height:1px;background:#b2b2b2"></div>
<div style="left:124px;top:687px;width:774px;height:1px;background:#d4d4d4"></div>
<div style="left:95px;top:712px;width:28px;height:1px;background:#b2b2b2"></div>
<div style="left:124px;top:712px;width:774px;height:1px;background:#d4d4d4"></div>
<div style="left:95px;top:737px;width:28px;height:1px;background:#b2b2b2"></div>
<div style="left:124px;top:737px;width:774px;height:1px;background:#d4d4d4"></div>
<div style="left:123px;top:588px;width:396px;height:24px;background:#d2d2d2"></div>
<div style="left:519px;top:588px;width:1px;height:24px;background:#bfbfbf"></div>
<div style="left:95px;top:613px;width:28px;height:24px;background:#d2d2d2"></div>
<div class="t" style="left:301px;top:593px;width:40px;text-align:center;font-size:14px;color:#217346">A</div>
<div class="t" style="left:600px;top:593px;width:40px;text-align:center;font-size:14px;color:#333">B</div>
<div class="t" style="left:773px;top:593px;width:40px;text-align:center;font-size:14px;color:#333">C</div>
<div class="t" style="left:95px;top:616.5px;width:28px;text-align:center;font-size:15.5px;color:#217346">1</div>
<div class="t" style="left:95px;top:641.5px;width:28px;text-align:center;font-size:15.5px;color:#333">2</div>
<div class="t" style="left:95px;top:666.5px;width:28px;text-align:center;font-size:15.5px;color:#333">3</div>
<div class="t" style="left:95px;top:691.5px;width:28px;text-align:center;font-size:15.5px;color:#333">4</div>
<div class="t" style="left:95px;top:716.5px;width:28px;text-align:center;font-size:15.5px;color:#333">5</div>
<div class="t" style="left:95px;top:741.5px;width:28px;text-align:center;font-size:15.5px;color:#333">6</div>
<div class="t f" style="left:127px;top:618.0px;width:43.0px;font-size:14px;color:#111;"><span>固定費</span></div>
<div class="t f" style="left:127.5px;top:643.0px;width:117.5px;font-size:14px;color:#111;"><span>１個当たりの費用</span></div>
<div class="t f" style="left:127px;top:668.0px;width:58.5px;font-size:14px;color:#111;"><span>製造個数</span></div>
<div class="t f" style="left:127px;top:693.0px;width:141.5px;font-size:14px;color:#111;"><span>1個当たりの販売価格</span></div>
<div class="t f" style="left:127px;top:718.0px;width:28.0px;font-size:14px;color:#111;"><span>利益</span></div>
<div class="t f" style="left:523px;top:616.5px;width:54.7px;font-size:15px;color:#111;"><span>1500000</span></div>
<div class="t f" style="left:523px;top:641.5px;width:22.6px;font-size:15px;color:#111;"><span>125</span></div>
<div class="t f" style="left:523px;top:666.5px;width:122.0px;font-size:15px;color:#111;"><span>9714.28571428571</span></div>
<div class="t f" style="left:523px;top:691.5px;width:22.6px;font-size:15px;color:#111;"><span>300</span></div>
<div class="t f" style="left:523px;top:716.5px;width:142.6px;font-size:15px;color:#111;"><span>=B4*B3-(B1+B2*B3)</span></div>
<div class="t f" style="left:724.4px;top:618.0px;width:34.9px;font-size:14px;color:#111;"><span>円/月</span></div>
<div class="t f" style="left:724.4px;top:643.0px;width:35.6px;font-size:14px;color:#111;"><span>円/個</span></div>
<div class="t f" style="left:724.4px;top:668.0px;width:12.6px;font-size:14px;color:#111;"><span>個</span></div>
<div class="t f" style="left:724.4px;top:693.0px;width:35.6px;font-size:14px;color:#111;"><span>円/個</span></div>
<div class="t f" style="left:724.4px;top:718.0px;width:34.9px;font-size:14px;color:#111;"><span>円/月</span></div>
<div style="left:122px;top:611px;width:399px;height:27px;border:2px solid #217346;box-sizing:border-box"></div>
<div style="left:517px;top:635px;width:6px;height:6px;background:#217346;border:1px solid #fff;box-sizing:content-box"></div>
<script>
(function(){var els=document.querySelectorAll('.f');for(var i=0;i<els.length;i++){var e=els[i];var w=parseFloat(e.style.width);var s=e.firstChild;var sw=s.getBoundingClientRect().width;if(sw>0&&w>0){s.style.transform='scaleX('+(w/sw)+')';}}})();
</script></body></html>
